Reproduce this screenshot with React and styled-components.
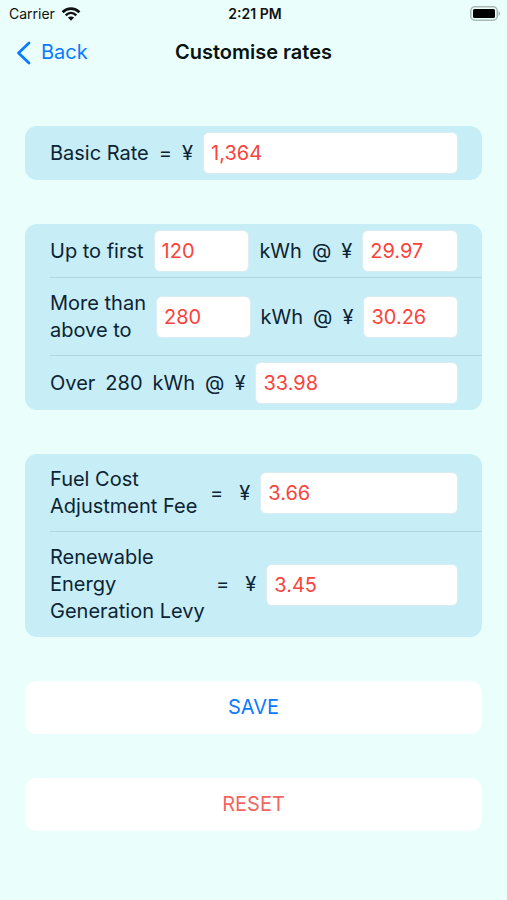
import React, { useState } from "react";
import styled, { createGlobalStyle } from "styled-components";

const GlobalStyle = createGlobalStyle`
  body {
    margin: 0;
    background: #eafffb;
    font-family: Inter, "Liberation Sans", sans-serif;
  }

  * {
    box-sizing: border-box;
  }
`;

const ScreenStyled = styled.div`
  min-height: 100vh;
  color: #0c2333;
  font-size: 20px;
  line-height: 27px;
`;

const StatusBarStyled = styled.div`
  display: grid;
  grid-template-columns: 1fr auto 1fr;
  align-items: center;
  height: 27px;
  padding: 0 6px 0 9px;
  color: #111;
  font-size: 14px;
  line-height: 20px;

  .status {
    &__carrier {
      display: flex;
      align-items: center;
      gap: 6px;
    }

    &__time {
      font-weight: 600;
    }

    &__battery {
      justify-self: end;
    }
  }

  svg {
    display: block;
  }
`;

const NavBarStyled = styled.header`
  display: grid;
  grid-template-columns: 1fr auto 1fr;
  align-items: center;
  height: 51px;
  padding: 0 16px;
`;

const BackButtonStyled = styled.button`
  display: flex;
  align-items: center;
  justify-self: start;
  gap: 10px;
  padding: 0;
  border: none;
  background: none;
  color: #0a7aff;
  font: inherit;
  cursor: pointer;
`;

const TitleStyled = styled.h1`
  margin: 0;
  color: #0b1214;
  font-size: 20px;
  font-weight: 600;
`;

const FormStyled = styled.form`
  display: flex;
  flex-direction: column;
  gap: 44px;
  padding: 48px 25px 24px;
`;

const CardStyled = styled.section`
  padding-left: 25px;
  border-radius: 12px;
  background: #c7eef6;
`;

const RowStyled = styled.div`
  display: flex;
  align-items: center;
  gap: 10px;
  min-height: 54px;
  padding-right: 24px;

  &:not(:last-child) {
    box-shadow: inset 0 -1px 0 #b1d8e1;
  }
`;

const LabelStyled = styled.label`
  flex: 0 0 ${({ $width }) => ($width ? `${$width}px` : "auto")};
  padding: 12px 0;
`;

const UnitStyled = styled.span`
  flex: none;
  margin-right: ${({ $spaced }) => ($spaced ? "6px" : "0")};
`;

const InputStyled = styled.input`
  flex: 1 1 0;
  width: 0;
  min-width: 0;
  height: 42px;
  padding: 0 7px;
  border: 1px solid #dcedf2;
  border-radius: 6px;
  background: #fff;
  color: #f8443c;
  font: inherit;
`;

const ActionButtonStyled = styled.button`
  height: 53px;
  border: none;
  border-radius: 12px;
  background: #fff;
  color: ${({ $danger }) => ($danger ? "#f2665f" : "#0a7aff")};
  font: inherit;
  cursor: pointer;
`;

const WifiIcon = () => (
  <svg width="20" height="14" viewBox="0 0 20 14" fill="none">
    <path d="M1.6 5.2C6.4 0.5 13.6 0.5 18.4 5.2" stroke="#111" strokeWidth="2.7" />
    <path d="M4.7 8.3C7.8 5.3 12.2 5.3 15.3 8.3" stroke="#111" strokeWidth="2.4" />
    <path d="M10 13.8L6.9 10.6C8.7 9 11.3 9 13.1 10.6Z" fill="#111" />
  </svg>
);

const BatteryIcon = () => (
  <svg width="31" height="15" viewBox="0 0 31 15">
    <rect x="0.8" y="0.8" width="26.4" height="13.4" rx="4" fill="none" stroke="#a9b8b5" strokeWidth="1.5" />
    <rect x="3" y="3" width="22" height="9" rx="1.5" fill="#000" />
    <path d="M28.5 5C30.6 5.8 30.6 9.2 28.5 10Z" fill="#a9b8b5" />
  </svg>
);

const BackIcon = () => (
  <svg width="15" height="24" viewBox="0 0 15 24" fill="none">
    <path
      d="M13 2L2.5 12L13 22"
      stroke="currentColor"
      strokeWidth="2.8"
      strokeLinecap="round"
      strokeLinejoin="round"
    />
  </svg>
);

const defaultRates = {
  basic: "1,364",
  firstLimit: "120",
  firstRate: "29.97",
  secondLimit: "280",
  secondRate: "30.26",
  overRate: "33.98",
  fuel: "3.66",
  levy: "3.45",
};

const App = () => {
  const [rates, setRates] = useState(defaultRates);

  const field = (name) => ({
    id: name,
    name,
    value: rates[name],
    inputMode: "decimal",
    autoComplete: "off",
    onChange: (e) => setRates({ ...rates, [name]: e.target.value }),
  });

  return (
    <ScreenStyled>
      <GlobalStyle />
      <StatusBarStyled>
        <div className="status__carrier">
          Carrier
          <WifiIcon />
        </div>
        <span className="status__time">2:21 PM</span>
        <div className="status__battery">
          <BatteryIcon />
        </div>
      </StatusBarStyled>

      <NavBarStyled>
        <BackButtonStyled type="button">
          <BackIcon />
          Back
        </BackButtonStyled>
        <TitleStyled>Customise rates</TitleStyled>
      </NavBarStyled>

      <FormStyled onSubmit={(e) => e.preventDefault()}>
        <CardStyled>
          <RowStyled>
            <LabelStyled htmlFor="basic">Basic Rate</LabelStyled>
            <UnitStyled>=</UnitStyled>
            <UnitStyled>¥</UnitStyled>
            <InputStyled {...field("basic")} />
          </RowStyled>
        </CardStyled>

        <CardStyled>
          <RowStyled>
            <LabelStyled htmlFor="firstLimit">Up to first</LabelStyled>
            <InputStyled {...field("firstLimit")} />
            <UnitStyled>kWh</UnitStyled>
            <UnitStyled>@</UnitStyled>
            <UnitStyled>¥</UnitStyled>
            <InputStyled {...field("firstRate")} aria-label="First tier rate" />
          </RowStyled>
          <RowStyled>
            <LabelStyled htmlFor="secondLimit" $width={96}>
              More than above to
            </LabelStyled>
            <InputStyled {...field("secondLimit")} />
            <UnitStyled>kWh</UnitStyled>
            <UnitStyled>@</UnitStyled>
            <UnitStyled>¥</UnitStyled>
            <InputStyled {...field("secondRate")} aria-label="Second tier rate" />
          </RowStyled>
          <RowStyled>
            <LabelStyled htmlFor="overRate">Over</LabelStyled>
            <UnitStyled>{rates.secondLimit}</UnitStyled>
            <UnitStyled>kWh</UnitStyled>
            <UnitStyled>@</UnitStyled>
            <UnitStyled>¥</UnitStyled>
            <InputStyled {...field("overRate")} />
          </RowStyled>
        </CardStyled>

        <CardStyled>
          <RowStyled>
            <LabelStyled htmlFor="fuel" $width={150}>
              Fuel Cost Adjustment Fee
            </LabelStyled>
            <UnitStyled $spaced>=</UnitStyled>
            <UnitStyled>¥</UnitStyled>
            <InputStyled {...field("fuel")} />
          </RowStyled>
          <RowStyled>
            <LabelStyled htmlFor="levy" $width={156}>
              Renewable Energy Generation Levy
            </LabelStyled>
            <UnitStyled $spaced>=</UnitStyled>
            <UnitStyled>¥</UnitStyled>
            <InputStyled {...field("levy")} />
          </RowStyled>
        </CardStyled>

        <ActionButtonStyled type="submit">SAVE</ActionButtonStyled>
        <ActionButtonStyled type="button" $danger onClick={() => setRates(defaultRates)}>
          RESET
        </ActionButtonStyled>
      </FormStyled>
    </ScreenStyled>
  );
};

export default App;
